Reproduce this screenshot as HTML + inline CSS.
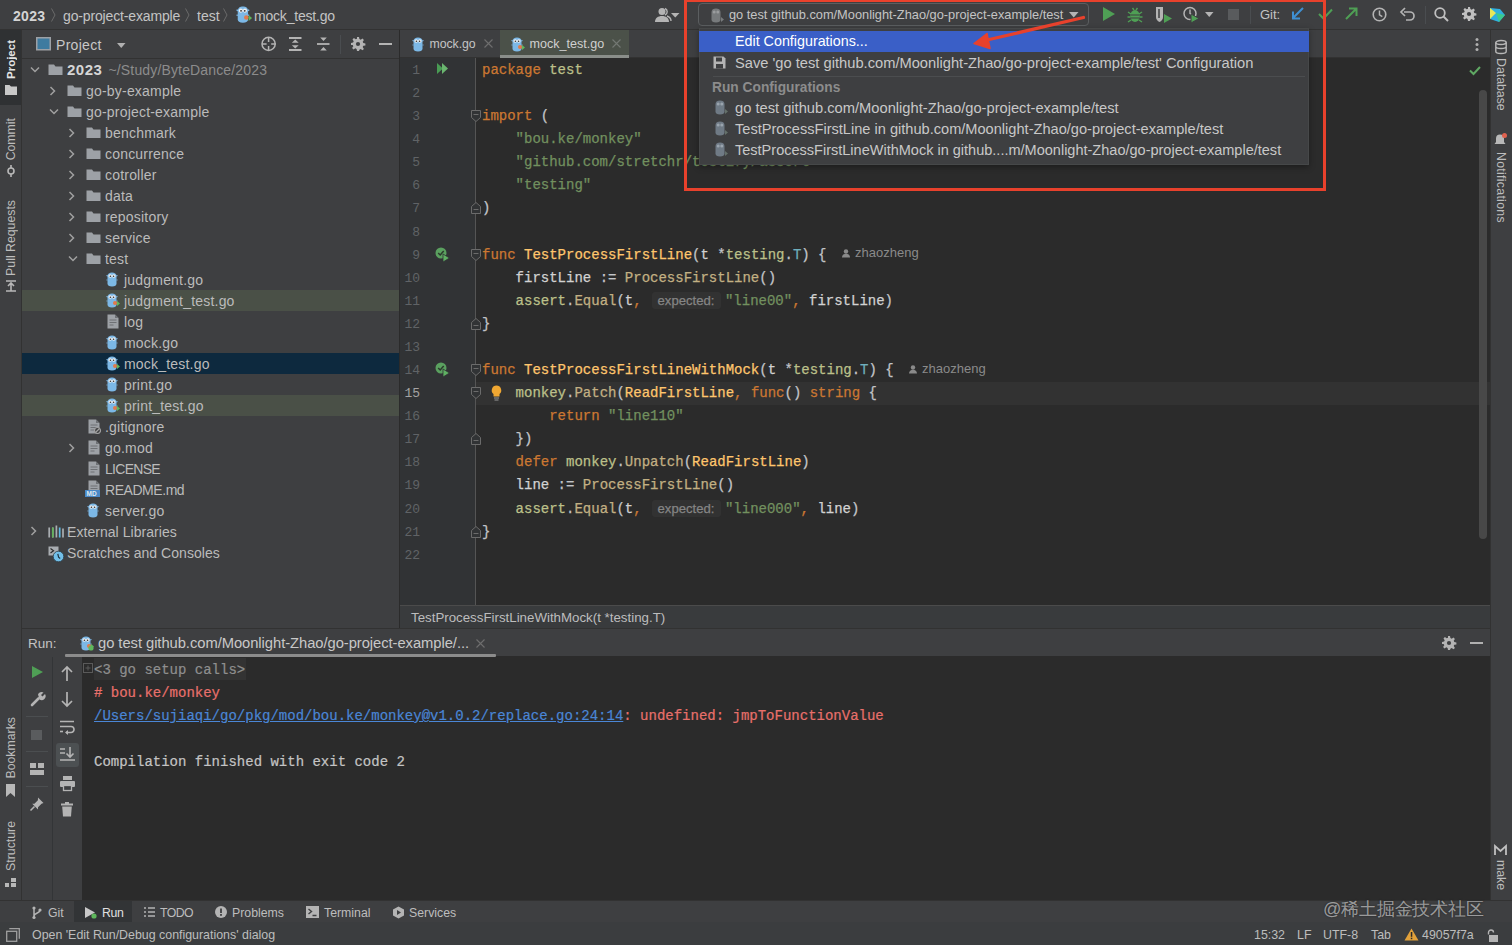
<!DOCTYPE html>
<html><head><meta charset="utf-8">
<style>
*{margin:0;padding:0;box-sizing:border-box}
html,body{width:1512px;height:945px;overflow:hidden;background:#3e3f41}
body{position:relative;font-family:"Liberation Sans",sans-serif;color:#bbbbbb;font-size:14px}
.a{position:absolute}
.t{position:absolute;white-space:pre}
.tr{position:absolute;white-space:pre;font-size:14px;line-height:21px;height:21px;color:#bbbbbb;letter-spacing:0.2px}
.cl{position:absolute;left:482px;white-space:pre;font-family:"Liberation Mono",monospace;font-size:14px;line-height:23px;height:23px;color:#c2c4c8;-webkit-text-stroke:0.25px currentColor}
.ln{position:absolute;width:22px;left:398px;text-align:right;font-family:"Liberation Mono",monospace;font-size:13px;line-height:23px;color:#6c6e71}
.k{color:#cc7832}.s{color:#72905f}.fd{color:#ffc66d}.pk{color:#bcc08a}.fc{color:#c2b083}.ty{color:#6fafbd}.v{color:#d2d2d2}
.hint{font-family:"Liberation Sans",sans-serif;font-size:13.1px;color:#858585;background:#323232;border-radius:3px;padding:0 0 0 5.5px;display:inline-block;width:69px;margin-left:10.4px;margin-right:3.9px;line-height:17px;height:17px;vertical-align:0px}
svg{position:absolute;overflow:visible}
</style></head><body>
<div class="a" style="left:0px;top:0px;width:1512px;height:29px;background:#3e3f41;"></div>
<div class="a" style="left:0px;top:29px;width:1512px;height:1px;background:#323232;"></div>
<div class="a" style="left:0px;top:30px;width:21px;height:870px;background:#3e3f41;"></div>
<div class="a" style="left:21px;top:30px;width:1px;height:870px;background:#323232;"></div>
<div class="a" style="left:0px;top:30px;width:21px;height:75px;background:#2f3133;"></div>
<div class="a" style="left:22px;top:30px;width:377px;height:28px;background:#3e3f41;"></div>
<div class="a" style="left:22px;top:58px;width:377px;height:1px;background:#323232;"></div>
<div class="a" style="left:22px;top:59px;width:377px;height:569px;background:#3e3f41;"></div>
<div class="a" style="left:399px;top:30px;width:1px;height:598px;background:#2b2b2b;"></div>
<div class="a" style="left:400px;top:30px;width:1090px;height:27px;background:#3e3f41;"></div>
<div class="a" style="left:400px;top:57px;width:1090px;height:1px;background:#323232;"></div>
<div class="a" style="left:400px;top:58px;width:76px;height:547px;background:#313335;"></div>
<div class="a" style="left:476px;top:58px;width:1014px;height:547px;background:#2b2b2b;"></div>
<div class="a" style="left:475px;top:58px;width:1px;height:547px;background:#555555;"></div>
<div class="a" style="left:400px;top:605px;width:1090px;height:1px;background:#4b4b4b;"></div>
<div class="a" style="left:400px;top:606px;width:1090px;height:22px;background:#393b3d;"></div>
<div class="a" style="left:22px;top:628px;width:1468px;height:1px;background:#323232;"></div>
<div class="a" style="left:22px;top:629px;width:1468px;height:27px;background:#3e3f41;"></div>
<div class="a" style="left:22px;top:656px;width:60px;height:244px;background:#3e3f41;"></div>
<div class="a" style="left:82px;top:656px;width:1408px;height:244px;background:#2b2b2b;"></div>
<div class="a" style="left:1490px;top:30px;width:1px;height:870px;background:#323232;"></div>
<div class="a" style="left:1491px;top:30px;width:21px;height:870px;background:#3e3f41;"></div>
<div class="a" style="left:0px;top:900px;width:1512px;height:1px;background:#323232;"></div>
<div class="a" style="left:0px;top:901px;width:1512px;height:21px;background:#3e3f41;"></div>
<div class="a" style="left:0px;top:922px;width:1512px;height:23px;background:#3b3d3f;"></div>
<div class="a" style="left:22px;top:290px;width:377px;height:21px;background:#4a5047;"></div>
<div class="a" style="left:22px;top:353px;width:377px;height:21px;background:#0d293e;"></div>
<div class="a" style="left:22px;top:395px;width:377px;height:21px;background:#4a5047;"></div>
<svg style="left:30px;top:66px;" width="10" height="7" viewBox="0 0 10 7"><path d="M1 1.5l4 4l4-4" fill="none" stroke="#a0a0a0" stroke-width="1.5"/></svg>
<svg style="left:48px;top:64px;" width="15" height="12" viewBox="0 0 15 12"><path d="M0.5 0.5h5.5l1.5 2h7v8.5h-14z" fill="#9da1a6"/></svg>
<div class="tr" style="left:67px;top:59.5px;font-weight:bold;color:#d6d6d6;font-size:15px;letter-spacing:0.5px;top:58.5px">2023</div>
<div class="tr" style="left:108.5px;top:59.5px;color:#8c8c8c;letter-spacing:0.15px">~/Study/ByteDance/2023</div>
<svg style="left:49px;top:86px;" width="7" height="10" viewBox="0 0 7 10"><path d="M1.5 1l4 4l-4 4" fill="none" stroke="#a0a0a0" stroke-width="1.5"/></svg>
<svg style="left:67px;top:85px;" width="15" height="12" viewBox="0 0 15 12"><path d="M0.5 0.5h5.5l1.5 2h7v8.5h-14z" fill="#9da1a6"/></svg>
<div class="tr" style="left:86px;top:80.5px;">go-by-example</div>
<svg style="left:49px;top:108px;" width="10" height="7" viewBox="0 0 10 7"><path d="M1 1.5l4 4l4-4" fill="none" stroke="#a0a0a0" stroke-width="1.5"/></svg>
<svg style="left:67px;top:106px;" width="15" height="12" viewBox="0 0 15 12"><path d="M0.5 0.5h5.5l1.5 2h7v8.5h-14z" fill="#9da1a6"/></svg>
<div class="tr" style="left:86px;top:101.5px;">go-project-example</div>
<svg style="left:68px;top:128px;" width="7" height="10" viewBox="0 0 7 10"><path d="M1.5 1l4 4l-4 4" fill="none" stroke="#a0a0a0" stroke-width="1.5"/></svg>
<svg style="left:86px;top:127px;" width="15" height="12" viewBox="0 0 15 12"><path d="M0.5 0.5h5.5l1.5 2h7v8.5h-14z" fill="#9da1a6"/></svg>
<div class="tr" style="left:105px;top:122.5px;">benchmark</div>
<svg style="left:68px;top:149px;" width="7" height="10" viewBox="0 0 7 10"><path d="M1.5 1l4 4l-4 4" fill="none" stroke="#a0a0a0" stroke-width="1.5"/></svg>
<svg style="left:86px;top:148px;" width="15" height="12" viewBox="0 0 15 12"><path d="M0.5 0.5h5.5l1.5 2h7v8.5h-14z" fill="#9da1a6"/></svg>
<div class="tr" style="left:105px;top:143.5px;">concurrence</div>
<svg style="left:68px;top:170px;" width="7" height="10" viewBox="0 0 7 10"><path d="M1.5 1l4 4l-4 4" fill="none" stroke="#a0a0a0" stroke-width="1.5"/></svg>
<svg style="left:86px;top:169px;" width="15" height="12" viewBox="0 0 15 12"><path d="M0.5 0.5h5.5l1.5 2h7v8.5h-14z" fill="#9da1a6"/></svg>
<div class="tr" style="left:105px;top:164.5px;">cotroller</div>
<svg style="left:68px;top:191px;" width="7" height="10" viewBox="0 0 7 10"><path d="M1.5 1l4 4l-4 4" fill="none" stroke="#a0a0a0" stroke-width="1.5"/></svg>
<svg style="left:86px;top:190px;" width="15" height="12" viewBox="0 0 15 12"><path d="M0.5 0.5h5.5l1.5 2h7v8.5h-14z" fill="#9da1a6"/></svg>
<div class="tr" style="left:105px;top:185.5px;">data</div>
<svg style="left:68px;top:212px;" width="7" height="10" viewBox="0 0 7 10"><path d="M1.5 1l4 4l-4 4" fill="none" stroke="#a0a0a0" stroke-width="1.5"/></svg>
<svg style="left:86px;top:211px;" width="15" height="12" viewBox="0 0 15 12"><path d="M0.5 0.5h5.5l1.5 2h7v8.5h-14z" fill="#9da1a6"/></svg>
<div class="tr" style="left:105px;top:206.5px;">repository</div>
<svg style="left:68px;top:233px;" width="7" height="10" viewBox="0 0 7 10"><path d="M1.5 1l4 4l-4 4" fill="none" stroke="#a0a0a0" stroke-width="1.5"/></svg>
<svg style="left:86px;top:232px;" width="15" height="12" viewBox="0 0 15 12"><path d="M0.5 0.5h5.5l1.5 2h7v8.5h-14z" fill="#9da1a6"/></svg>
<div class="tr" style="left:105px;top:227.5px;">service</div>
<svg style="left:68px;top:255px;" width="10" height="7" viewBox="0 0 10 7"><path d="M1 1.5l4 4l4-4" fill="none" stroke="#a0a0a0" stroke-width="1.5"/></svg>
<svg style="left:86px;top:253px;" width="15" height="12" viewBox="0 0 15 12"><path d="M0.5 0.5h5.5l1.5 2h7v8.5h-14z" fill="#9da1a6"/></svg>
<div class="tr" style="left:105px;top:248.5px;">test</div>
<svg style="left:106px;top:272px;" width="15" height="15" viewBox="0 0 15 15"><path d="M1.5 4.5C1.5 1.5 3.5 0.5 6 0.5S10.5 1.5 10.5 4.5V11.5C10.5 13.5 9 14.5 6 14.5S1.5 13.5 1.5 11.5Z" fill="#7cb8e6"/><path d="M0.5 3.5l1.5 0.5M11.5 3.5l-1.5 0.5M0.5 8l1 0M11.5 8l-1 0" stroke="#7cb8e6" stroke-width="1.2"/><circle cx="4.2" cy="4" r="1.8" fill="#f0f0f0"/><circle cx="7.8" cy="4" r="1.8" fill="#f0f0f0"/><circle cx="4.4" cy="4.2" r="0.8" fill="#333"/><circle cx="7.6" cy="4.2" r="0.8" fill="#333"/></svg>
<div class="tr" style="left:124px;top:269.5px;">judgment.go</div>
<svg style="left:106px;top:293px;" width="15" height="15" viewBox="0 0 15 15"><path d="M1.5 4.5C1.5 1.5 3.5 0.5 6 0.5S10.5 1.5 10.5 4.5V11.5C10.5 13.5 9 14.5 6 14.5S1.5 13.5 1.5 11.5Z" fill="#7cb8e6"/><path d="M0.5 3.5l1.5 0.5M11.5 3.5l-1.5 0.5M0.5 8l1 0M11.5 8l-1 0" stroke="#7cb8e6" stroke-width="1.2"/><circle cx="4.2" cy="4" r="1.8" fill="#f0f0f0"/><circle cx="7.8" cy="4" r="1.8" fill="#f0f0f0"/><circle cx="4.4" cy="4.2" r="0.8" fill="#333"/><circle cx="7.6" cy="4.2" r="0.8" fill="#333"/><circle cx="9" cy="10" r="2" fill="#e07a4a"/><path d="M11 8l3 2.5l-3 2.5z" fill="#5fb85c"/></svg>
<div class="tr" style="left:124px;top:290.5px;">judgment_test.go</div>
<svg style="left:107px;top:314px;" width="12" height="15" viewBox="0 0 12 15"><path d="M0.5 0.5h7.5l3.5 3.5v10.5h-11z" fill="#9da1a6"/><path d="M8 0.5v3.5h3.5" fill="#6e7175"/><path d="M2.5 6h7M2.5 8.5h7M2.5 11h4" stroke="#6e7175" stroke-width="1"/></svg>
<div class="tr" style="left:124px;top:311.5px;">log</div>
<svg style="left:106px;top:335px;" width="15" height="15" viewBox="0 0 15 15"><path d="M1.5 4.5C1.5 1.5 3.5 0.5 6 0.5S10.5 1.5 10.5 4.5V11.5C10.5 13.5 9 14.5 6 14.5S1.5 13.5 1.5 11.5Z" fill="#7cb8e6"/><path d="M0.5 3.5l1.5 0.5M11.5 3.5l-1.5 0.5M0.5 8l1 0M11.5 8l-1 0" stroke="#7cb8e6" stroke-width="1.2"/><circle cx="4.2" cy="4" r="1.8" fill="#f0f0f0"/><circle cx="7.8" cy="4" r="1.8" fill="#f0f0f0"/><circle cx="4.4" cy="4.2" r="0.8" fill="#333"/><circle cx="7.6" cy="4.2" r="0.8" fill="#333"/></svg>
<div class="tr" style="left:124px;top:332.5px;">mock.go</div>
<svg style="left:106px;top:356px;" width="15" height="15" viewBox="0 0 15 15"><path d="M1.5 4.5C1.5 1.5 3.5 0.5 6 0.5S10.5 1.5 10.5 4.5V11.5C10.5 13.5 9 14.5 6 14.5S1.5 13.5 1.5 11.5Z" fill="#7cb8e6"/><path d="M0.5 3.5l1.5 0.5M11.5 3.5l-1.5 0.5M0.5 8l1 0M11.5 8l-1 0" stroke="#7cb8e6" stroke-width="1.2"/><circle cx="4.2" cy="4" r="1.8" fill="#f0f0f0"/><circle cx="7.8" cy="4" r="1.8" fill="#f0f0f0"/><circle cx="4.4" cy="4.2" r="0.8" fill="#333"/><circle cx="7.6" cy="4.2" r="0.8" fill="#333"/><circle cx="9" cy="10" r="2" fill="#e07a4a"/><path d="M11 8l3 2.5l-3 2.5z" fill="#5fb85c"/></svg>
<div class="tr" style="left:124px;top:353.5px;">mock_test.go</div>
<svg style="left:106px;top:377px;" width="15" height="15" viewBox="0 0 15 15"><path d="M1.5 4.5C1.5 1.5 3.5 0.5 6 0.5S10.5 1.5 10.5 4.5V11.5C10.5 13.5 9 14.5 6 14.5S1.5 13.5 1.5 11.5Z" fill="#7cb8e6"/><path d="M0.5 3.5l1.5 0.5M11.5 3.5l-1.5 0.5M0.5 8l1 0M11.5 8l-1 0" stroke="#7cb8e6" stroke-width="1.2"/><circle cx="4.2" cy="4" r="1.8" fill="#f0f0f0"/><circle cx="7.8" cy="4" r="1.8" fill="#f0f0f0"/><circle cx="4.4" cy="4.2" r="0.8" fill="#333"/><circle cx="7.6" cy="4.2" r="0.8" fill="#333"/></svg>
<div class="tr" style="left:124px;top:374.5px;">print.go</div>
<svg style="left:106px;top:398px;" width="15" height="15" viewBox="0 0 15 15"><path d="M1.5 4.5C1.5 1.5 3.5 0.5 6 0.5S10.5 1.5 10.5 4.5V11.5C10.5 13.5 9 14.5 6 14.5S1.5 13.5 1.5 11.5Z" fill="#7cb8e6"/><path d="M0.5 3.5l1.5 0.5M11.5 3.5l-1.5 0.5M0.5 8l1 0M11.5 8l-1 0" stroke="#7cb8e6" stroke-width="1.2"/><circle cx="4.2" cy="4" r="1.8" fill="#f0f0f0"/><circle cx="7.8" cy="4" r="1.8" fill="#f0f0f0"/><circle cx="4.4" cy="4.2" r="0.8" fill="#333"/><circle cx="7.6" cy="4.2" r="0.8" fill="#333"/><circle cx="9" cy="10" r="2" fill="#e07a4a"/><path d="M11 8l3 2.5l-3 2.5z" fill="#5fb85c"/></svg>
<div class="tr" style="left:124px;top:395.5px;">print_test.go</div>
<svg style="left:88px;top:419px;" width="12" height="15" viewBox="0 0 12 15"><path d="M0.5 0.5h7.5l3.5 3.5v10.5h-11z" fill="#9da1a6"/><path d="M8 0.5v3.5h3.5" fill="#6e7175"/><path d="M2.5 6h7M2.5 8.5h7M2.5 11h4" stroke="#6e7175" stroke-width="1"/></svg>
<svg style="left:94px;top:427px;" width="8" height="8" viewBox="0 0 8 8"><circle cx="3.5" cy="3.5" r="3" fill="#3e3f41" stroke="#a0a0a0" stroke-width="1.2"/><path d="M1.5 5.5l4-4" stroke="#a0a0a0" stroke-width="1.2"/></svg>
<div class="tr" style="left:105px;top:416.5px;">.gitignore</div>
<svg style="left:68px;top:443px;" width="7" height="10" viewBox="0 0 7 10"><path d="M1.5 1l4 4l-4 4" fill="none" stroke="#a0a0a0" stroke-width="1.5"/></svg>
<svg style="left:88px;top:440px;" width="12" height="15" viewBox="0 0 12 15"><path d="M0.5 0.5h7.5l3.5 3.5v10.5h-11z" fill="#9da1a6"/><path d="M8 0.5v3.5h3.5" fill="#6e7175"/><path d="M2.5 6h7M2.5 8.5h7M2.5 11h4" stroke="#6e7175" stroke-width="1"/></svg>
<div class="tr" style="left:105px;top:437.5px;">go.mod</div>
<svg style="left:88px;top:461px;" width="12" height="15" viewBox="0 0 12 15"><path d="M0.5 0.5h7.5l3.5 3.5v10.5h-11z" fill="#9da1a6"/><path d="M8 0.5v3.5h3.5" fill="#6e7175"/><path d="M2.5 6h7M2.5 8.5h7M2.5 11h4" stroke="#6e7175" stroke-width="1"/></svg>
<div class="tr" style="left:105px;top:458.5px;letter-spacing:-0.7px">LICENSE</div>
<svg style="left:88px;top:480px;" width="12" height="15" viewBox="0 0 12 15"><path d="M0.5 0.5h7.5l3.5 3.5v10.5h-11z" fill="#9da1a6"/><path d="M8 0.5v3.5h3.5" fill="#6e7175"/><path d="M2.5 6h7M2.5 8.5h7M2.5 11h4" stroke="#6e7175" stroke-width="1"/></svg>
<svg style="left:85px;top:490px;" width="16" height="8" viewBox="0 0 16 8"><rect x="0" y="0" width="15" height="7" fill="#4a88c7"/><text x="1.5" y="6" font-size="6.5" font-family="Liberation Sans" font-weight="bold" fill="#dfe8f0">MD</text></svg>
<div class="tr" style="left:105px;top:479.5px;letter-spacing:-0.45px">README.md</div>
<svg style="left:87px;top:503px;" width="15" height="15" viewBox="0 0 15 15"><path d="M1.5 4.5C1.5 1.5 3.5 0.5 6 0.5S10.5 1.5 10.5 4.5V11.5C10.5 13.5 9 14.5 6 14.5S1.5 13.5 1.5 11.5Z" fill="#7cb8e6"/><path d="M0.5 3.5l1.5 0.5M11.5 3.5l-1.5 0.5M0.5 8l1 0M11.5 8l-1 0" stroke="#7cb8e6" stroke-width="1.2"/><circle cx="4.2" cy="4" r="1.8" fill="#f0f0f0"/><circle cx="7.8" cy="4" r="1.8" fill="#f0f0f0"/><circle cx="4.4" cy="4.2" r="0.8" fill="#333"/><circle cx="7.6" cy="4.2" r="0.8" fill="#333"/></svg>
<div class="tr" style="left:105px;top:500.5px;">server.go</div>
<svg style="left:30px;top:526px;" width="7" height="10" viewBox="0 0 7 10"><path d="M1.5 1l4 4l-4 4" fill="none" stroke="#a0a0a0" stroke-width="1.5"/></svg>
<svg style="left:48px;top:525px;" width="16" height="14" viewBox="0 0 16 14"><path d="M1.2 2.5v10M4.8 2.5v10M8.4 0.5v12M15 3.5v9" stroke="#a9adb1" stroke-width="1.7"/><path d="M4.8 2.5v10" stroke="#62b35a" stroke-width="1.7"/><path d="M11.7 2.5v10" stroke="#5cb8e0" stroke-width="1.7"/></svg>
<div class="tr" style="left:67px;top:521.5px;letter-spacing:0.05px">External Libraries</div>
<svg style="left:48px;top:546px;" width="18" height="16" viewBox="0 0 18 16"><path d="M0.5 0.5h10v9h-10z" fill="#a9adb1"/><path d="M2.5 2.5l3 2.2l-3 2.2" stroke="#2b2b2b" stroke-width="1.2" fill="none"/><circle cx="10.5" cy="10.5" r="5.3" fill="#72bfe8" stroke="#2a3a44" stroke-width="0.8"/><path d="M9.8 7.8l0.8 3.4l1.6 1.2" stroke="#1e3340" stroke-width="1.2" fill="none"/></svg>
<div class="tr" style="left:67px;top:542.5px;letter-spacing:0.05px">Scratches and Consoles</div>
<svg style="left:36px;top:37px;" width="15" height="14" viewBox="0 0 15 14"><rect x="0.75" y="0.75" width="13.5" height="12" fill="#3e7ba0" stroke="#9da1a6" stroke-width="1.5"/></svg>
<div class="t" style="left:56px;top:34.5px;font-size:14px;line-height:21px;color:#c8c8c8;letter-spacing:0.3px">Project</div>
<svg style="left:117px;top:43px;" width="9" height="6" viewBox="0 0 9 6"><path d="M0 0h8.5l-4.25 5z" fill="#b0b0b0"/></svg>
<svg style="left:261px;top:36px;" width="16" height="16" viewBox="0 0 16 16"><circle cx="7.6" cy="7.9" r="6.6" fill="none" stroke="#b4b4b4" stroke-width="1.5"/><path d="M7.6 1.3v4.6M7.6 9.9v4.6M1 7.9h4.6M10.2 7.9h4.6" stroke="#b4b4b4" stroke-width="1.5"/></svg>
<svg style="left:289px;top:36px;" width="14" height="16" viewBox="0 0 14 16"><path d="M0 2h12.5M0 14h12.5" stroke="#b4b4b4" stroke-width="1.8"/><path d="M2.8 6.8l3.45-3.2l3.45 3.2z M2.8 9.2l3.45 3.2l3.45-3.2z" fill="#b4b4b4"/></svg>
<svg style="left:317px;top:36px;" width="14" height="16" viewBox="0 0 14 16"><path d="M0 8h12.5" stroke="#b4b4b4" stroke-width="1.8"/><path d="M3.2 1.6h6.6l-3.3 3.4z M3.2 14.4h6.6l-3.3-3.4z" fill="#b4b4b4"/></svg>
<div class="a" style="left:340px;top:35px;width:1px;height:19px;background:#4a4d50;"></div>
<svg style="left:351px;top:37px;" width="14" height="14" viewBox="0 0 14 14"><path d="M6 0h2l.4 2.1 1.3.6 1.8-1.2 1.4 1.4-1.2 1.8.6 1.3 2.1.4v2l-2.1.4-.6 1.3 1.2 1.8-1.4 1.4-1.8-1.2-1.3.6L8 14H6l-.4-2.1-1.3-.6-1.8 1.2-1.4-1.4 1.2-1.8-.6-1.3L0 8V6l2.1-.4.6-1.3-1.2-1.8 1.4-1.4 1.8 1.2 1.3-.6z" fill="#b4b4b4"/><circle cx="7" cy="7" r="2.1" fill="#3e3f41"/></svg>
<svg style="left:379px;top:43px;" width="13" height="2" viewBox="0 0 13 2"><rect width="13" height="2" fill="#b4b4b4"/></svg>
<div class="t" style="left:4px;top:40px;writing-mode:vertical-rl;transform:rotate(180deg);font-size:12.3px;line-height:14px;color:#bdbdbd;font-weight:bold;color:#e4e4e4;font-size:11.5px">Project</div>
<svg style="left:5px;top:85px;" width="12" height="10" viewBox="0 0 12 10"><path d="M0 0h4.5l1.5 1.5h6v8.5h-12z" fill="#c8c8c8"/></svg>
<div class="t" style="left:4px;top:118px;writing-mode:vertical-rl;transform:rotate(180deg);font-size:12.3px;line-height:14px;color:#bdbdbd;">Commit</div>
<svg style="left:5px;top:165px;" width="12" height="12" viewBox="0 0 12 12"><circle cx="6" cy="6" r="3" fill="none" stroke="#b8b8b8" stroke-width="1.6"/><path d="M6 0v3M6 9v3" stroke="#b8b8b8" stroke-width="1.6"/></svg>
<div class="t" style="left:4px;top:200px;writing-mode:vertical-rl;transform:rotate(180deg);font-size:12.3px;line-height:14px;color:#bdbdbd;">Pull Requests</div>
<svg style="left:5px;top:280px;" width="12" height="12" viewBox="0 0 12 12"><path d="M1 1h10M1 11h10M6 3v8M3 6l3-3l3 3" fill="none" stroke="#b8b8b8" stroke-width="1.6"/></svg>
<div class="t" style="left:4px;top:717px;writing-mode:vertical-rl;transform:rotate(180deg);font-size:12.3px;line-height:14px;color:#bdbdbd;">Bookmarks</div>
<svg style="left:6px;top:784px;" width="9" height="13" viewBox="0 0 9 13"><path d="M0 0h9v13l-4.5-4l-4.5 4z" fill="#b8b8b8"/></svg>
<div class="t" style="left:4px;top:821px;writing-mode:vertical-rl;transform:rotate(180deg);font-size:12.3px;line-height:14px;color:#bdbdbd;">Structure</div>
<svg style="left:5px;top:878px;" width="12" height="10" viewBox="0 0 12 10"><rect x="0" y="5" width="4" height="4" fill="#b8b8b8"/><rect x="6" y="5" width="5" height="4" fill="#b8b8b8"/><rect x="6" y="0" width="5" height="4" fill="#b8b8b8"/></svg>
<div class="t" style="left:13px;top:5.5px;font-weight:bold;font-size:14px;line-height:21px;color:#d4d4d4;letter-spacing:0.3px">2023</div>
<svg style="left:51px;top:8px;" width="5" height="14" viewBox="0 0 5 14"><path d="M0.5 0.5l3.5 6.5l-3.5 6.5" fill="none" stroke="#6a6a6a" stroke-width="1"/></svg>
<div class="t" style="left:63px;top:5.5px;font-size:14px;line-height:21px;color:#c4c4c4;letter-spacing:-0.15px">go-project-example</div>
<svg style="left:185px;top:8px;" width="5" height="14" viewBox="0 0 5 14"><path d="M0.5 0.5l3.5 6.5l-3.5 6.5" fill="none" stroke="#6a6a6a" stroke-width="1"/></svg>
<div class="t" style="left:197px;top:5.5px;font-size:14px;line-height:21px;color:#c4c4c4">test</div>
<svg style="left:223px;top:8px;" width="5" height="14" viewBox="0 0 5 14"><path d="M0.5 0.5l3.5 6.5l-3.5 6.5" fill="none" stroke="#6a6a6a" stroke-width="1"/></svg>
<div class="a" style="left:236px;top:6px;transform:scale(1.15);transform-origin:0 0"><svg style="left:0px;top:0px;" width="15" height="15" viewBox="0 0 15 15"><path d="M1.5 4.5C1.5 1.5 3.5 0.5 6 0.5S10.5 1.5 10.5 4.5V11.5C10.5 13.5 9 14.5 6 14.5S1.5 13.5 1.5 11.5Z" fill="#7cb8e6"/><path d="M0.5 3.5l1.5 0.5M11.5 3.5l-1.5 0.5M0.5 8l1 0M11.5 8l-1 0" stroke="#7cb8e6" stroke-width="1.2"/><circle cx="4.2" cy="4" r="1.8" fill="#f0f0f0"/><circle cx="7.8" cy="4" r="1.8" fill="#f0f0f0"/><circle cx="4.4" cy="4.2" r="0.8" fill="#333"/><circle cx="7.6" cy="4.2" r="0.8" fill="#333"/><circle cx="9" cy="10" r="2" fill="#e07a4a"/><path d="M11 8l3 2.5l-3 2.5z" fill="#5fb85c"/></svg>
</div><div class="t" style="left:254px;top:5.5px;font-size:14px;line-height:21px;color:#c4c4c4;letter-spacing:-0.2px">mock_test.go</div>
<svg style="left:412px;top:37px;" width="15" height="15" viewBox="0 0 15 15"><path d="M1.5 4.5C1.5 1.5 3.5 0.5 6 0.5S10.5 1.5 10.5 4.5V11.5C10.5 13.5 9 14.5 6 14.5S1.5 13.5 1.5 11.5Z" fill="#7cb8e6"/><path d="M0.5 3.5l1.5 0.5M11.5 3.5l-1.5 0.5M0.5 8l1 0M11.5 8l-1 0" stroke="#7cb8e6" stroke-width="1.2"/><circle cx="4.2" cy="4" r="1.8" fill="#f0f0f0"/><circle cx="7.8" cy="4" r="1.8" fill="#f0f0f0"/><circle cx="4.4" cy="4.2" r="0.8" fill="#333"/><circle cx="7.6" cy="4.2" r="0.8" fill="#333"/></svg>
<div class="t" style="left:429.5px;top:34px;font-size:12.3px;line-height:21px;color:#c4c4c4;letter-spacing:-0.05px">mock.go</div>
<svg style="left:484px;top:39px;" width="9" height="9" viewBox="0 0 9 9"><path d="M0.5 0.5l8 8M8.5 0.5l-8 8" stroke="#6e6e6e" stroke-width="1.1"/></svg>
<div class="a" style="left:500px;top:30px;width:129px;height:25px;background:#4b5149;"></div>
<div class="a" style="left:500px;top:55px;width:129px;height:3px;background:#8a8e8a;"></div>
<svg style="left:511px;top:37px;" width="15" height="15" viewBox="0 0 15 15"><path d="M1.5 4.5C1.5 1.5 3.5 0.5 6 0.5S10.5 1.5 10.5 4.5V11.5C10.5 13.5 9 14.5 6 14.5S1.5 13.5 1.5 11.5Z" fill="#7cb8e6"/><path d="M0.5 3.5l1.5 0.5M11.5 3.5l-1.5 0.5M0.5 8l1 0M11.5 8l-1 0" stroke="#7cb8e6" stroke-width="1.2"/><circle cx="4.2" cy="4" r="1.8" fill="#f0f0f0"/><circle cx="7.8" cy="4" r="1.8" fill="#f0f0f0"/><circle cx="4.4" cy="4.2" r="0.8" fill="#333"/><circle cx="7.6" cy="4.2" r="0.8" fill="#333"/><circle cx="9" cy="10" r="2" fill="#e07a4a"/><path d="M11 8l3 2.5l-3 2.5z" fill="#5fb85c"/></svg>
<div class="t" style="left:529.5px;top:34px;font-size:12.55px;line-height:21px;color:#d0d0d0">mock_test.go</div>
<svg style="left:612px;top:39px;" width="9" height="9" viewBox="0 0 9 9"><path d="M0.5 0.5l8 8M8.5 0.5l-8 8" stroke="#737873" stroke-width="1.1"/></svg>
<svg style="left:1475px;top:38px;" width="4" height="13" viewBox="0 0 4 13"><circle cx="2" cy="1.5" r="1.5" fill="#b0b0b0"/><circle cx="2" cy="6.5" r="1.5" fill="#b0b0b0"/><circle cx="2" cy="11.5" r="1.5" fill="#b0b0b0"/></svg>
<div class="a" style="left:476px;top:382.12px;width:1014px;height:23px;background:#323232;"></div>
<div class="a" style="left:400px;top:382.12px;width:75px;height:23px;background:#313335;"></div>
<div class="cl" style="left:482px;top:59.0px;"><span class="k">package</span> <span class="pk">test</span></div>
<div class="cl" style="left:482px;top:105.16px;"><span class="k">import</span> (</div>
<div class="cl" style="left:482px;top:128.24px;">    <span class="s">&quot;bou.ke/monkey&quot;</span></div>
<div class="cl" style="left:482px;top:151.32px;">    <span class="s">&quot;github.com/stretchr/testify/assert&quot;</span></div>
<div class="cl" style="left:482px;top:174.4px;">    <span class="s">&quot;testing&quot;</span></div>
<div class="cl" style="left:482px;top:197.48px;">)</div>
<div class="cl" style="left:482px;top:243.64px;"><span class="k">func</span> <span class="fd">TestProcessFirstLine</span>(<span class="v">t</span> *<span class="pk">testing</span>.<span class="ty">T</span>) {</div>
<div class="cl" style="left:482px;top:266.72px;">    <span class="v">firstLine</span> := <span class="fc">ProcessFirstLine</span>()</div>
<div class="cl" style="left:482px;top:289.8px;">    <span class="pk">assert</span>.<span class="fc">Equal</span>(<span class="v">t</span><span class="k">,</span><span class="hint">expected:</span><span class="s">&quot;line00&quot;</span><span class="k">,</span> <span class="v">firstLine</span>)</div>
<div class="cl" style="left:482px;top:312.88px;">}</div>
<div class="cl" style="left:482px;top:359.04px;"><span class="k">func</span> <span class="fd">TestProcessFirstLineWithMock</span>(<span class="v">t</span> *<span class="pk">testing</span>.<span class="ty">T</span>) {</div>
<div class="cl" style="left:482px;top:382.12px;">    <span class="pk">monkey</span>.<span class="fc">Patch</span>(<span class="fd">ReadFirstLine</span><span class="k">,</span> <span class="k">func</span>() <span class="k">string</span> {</div>
<div class="cl" style="left:482px;top:405.2px;">        <span class="k">return</span> <span class="s">&quot;line110&quot;</span></div>
<div class="cl" style="left:482px;top:428.28px;">    })</div>
<div class="cl" style="left:482px;top:451.36px;">    <span class="k">defer</span> <span class="pk">monkey</span>.<span class="fc">Unpatch</span>(<span class="fd">ReadFirstLine</span>)</div>
<div class="cl" style="left:482px;top:474.44px;">    <span class="v">line</span> := <span class="fc">ProcessFirstLine</span>()</div>
<div class="cl" style="left:482px;top:497.52px;">    <span class="pk">assert</span>.<span class="fc">Equal</span>(<span class="v">t</span><span class="k">,</span><span class="hint">expected:</span><span class="s">&quot;line000&quot;</span><span class="k">,</span> <span class="v">line</span>)</div>
<div class="cl" style="left:482px;top:520.6px;">}</div>
<div class="ln" style="left:398px;top:59.0px;color:#606366">1</div>
<div class="ln" style="left:398px;top:82.08px;color:#606366">2</div>
<div class="ln" style="left:398px;top:105.16px;color:#606366">3</div>
<div class="ln" style="left:398px;top:128.24px;color:#606366">4</div>
<div class="ln" style="left:398px;top:151.32px;color:#606366">5</div>
<div class="ln" style="left:398px;top:174.4px;color:#606366">6</div>
<div class="ln" style="left:398px;top:197.48px;color:#606366">7</div>
<div class="ln" style="left:398px;top:220.56px;color:#606366">8</div>
<div class="ln" style="left:398px;top:243.64px;color:#606366">9</div>
<div class="ln" style="left:398px;top:266.72px;color:#606366">10</div>
<div class="ln" style="left:398px;top:289.8px;color:#606366">11</div>
<div class="ln" style="left:398px;top:312.88px;color:#606366">12</div>
<div class="ln" style="left:398px;top:335.96px;color:#606366">13</div>
<div class="ln" style="left:398px;top:359.04px;color:#606366">14</div>
<div class="ln" style="left:398px;top:382.12px;color:#a4a3a3">15</div>
<div class="ln" style="left:398px;top:405.2px;color:#606366">16</div>
<div class="ln" style="left:398px;top:428.28px;color:#606366">17</div>
<div class="ln" style="left:398px;top:451.36px;color:#606366">18</div>
<div class="ln" style="left:398px;top:474.44px;color:#606366">19</div>
<div class="ln" style="left:398px;top:497.52px;color:#606366">20</div>
<div class="ln" style="left:398px;top:520.6px;color:#606366">21</div>
<div class="ln" style="left:398px;top:543.68px;color:#606366">22</div>
<svg style="left:842px;top:249.14px;" width="8" height="9" viewBox="0 0 8 9"><circle cx="4" cy="2.5" r="2.2" fill="#8a8a8a"/><path d="M0 8.5c0-2.5 1.8-3.8 4-3.8s4 1.3 4 3.8z" fill="#8a8a8a"/></svg>
<div class="t" style="left:855px;top:242.14px;font-size:13px;line-height:21px;color:#8a8a8a">zhaozheng</div>
<svg style="left:909px;top:364.54px;" width="8" height="9" viewBox="0 0 8 9"><circle cx="4" cy="2.5" r="2.2" fill="#8a8a8a"/><path d="M0 8.5c0-2.5 1.8-3.8 4-3.8s4 1.3 4 3.8z" fill="#8a8a8a"/></svg>
<div class="t" style="left:922px;top:357.54px;font-size:13px;line-height:21px;color:#8a8a8a">zhaozheng</div>
<svg style="left:437px;top:63px;" width="12" height="11" viewBox="0 0 12 11"><path d="M0 0l6 5.5l-6 5.5z" fill="#499c54"/><path d="M5 0l6 5.5l-6 5.5z" fill="#6ab56f"/><path d="M5 0l6 5.5l-6 5.5" fill="none" stroke="#2f3133" stroke-width="0"/></svg>
<svg style="left:435px;top:246.64px;" width="15" height="15" viewBox="0 0 15 15"><circle cx="6" cy="6" r="5.5" fill="#5aa05f"/><path d="M3.2 6l2 2l3.5-4" fill="none" stroke="#2b3a2c" stroke-width="1.5"/><path d="M8 7l6.5 4l-6.5 4z" fill="#5fb063" stroke="#313335" stroke-width="0.8"/></svg>
<svg style="left:435px;top:362.04px;" width="15" height="15" viewBox="0 0 15 15"><circle cx="6" cy="6" r="5.5" fill="#5aa05f"/><path d="M3.2 6l2 2l3.5-4" fill="none" stroke="#2b3a2c" stroke-width="1.5"/><path d="M8 7l6.5 4l-6.5 4z" fill="#5fb063" stroke="#313335" stroke-width="0.8"/></svg>
<svg style="left:471px;top:110.16px;" width="10" height="12" viewBox="0 0 10 12"><path d="M0.5 0.5h9v7l-4.5 4l-4.5-4z" fill="#313335" stroke="#6b6b6b" stroke-width="1"/><path d="M2.5 4.5h5" stroke="#6b6b6b" stroke-width="1"/></svg>
<svg style="left:471px;top:248.64px;" width="10" height="12" viewBox="0 0 10 12"><path d="M0.5 0.5h9v7l-4.5 4l-4.5-4z" fill="#313335" stroke="#6b6b6b" stroke-width="1"/><path d="M2.5 4.5h5" stroke="#6b6b6b" stroke-width="1"/></svg>
<svg style="left:471px;top:364.04px;" width="10" height="12" viewBox="0 0 10 12"><path d="M0.5 0.5h9v7l-4.5 4l-4.5-4z" fill="#313335" stroke="#6b6b6b" stroke-width="1"/><path d="M2.5 4.5h5" stroke="#6b6b6b" stroke-width="1"/></svg>
<svg style="left:471px;top:387.12px;" width="10" height="12" viewBox="0 0 10 12"><path d="M0.5 0.5h9v7l-4.5 4l-4.5-4z" fill="#313335" stroke="#6b6b6b" stroke-width="1"/><path d="M2.5 4.5h5" stroke="#6b6b6b" stroke-width="1"/></svg>
<svg style="left:471px;top:202.48px;" width="10" height="12" viewBox="0 0 10 12"><path d="M0.5 11.5h9v-7l-4.5-4l-4.5 4z" fill="#313335" stroke="#6b6b6b" stroke-width="1"/><path d="M2.5 7.5h5" stroke="#6b6b6b" stroke-width="1"/></svg>
<svg style="left:471px;top:317.88px;" width="10" height="12" viewBox="0 0 10 12"><path d="M0.5 11.5h9v-7l-4.5-4l-4.5 4z" fill="#313335" stroke="#6b6b6b" stroke-width="1"/><path d="M2.5 7.5h5" stroke="#6b6b6b" stroke-width="1"/></svg>
<svg style="left:471px;top:433.28px;" width="10" height="12" viewBox="0 0 10 12"><path d="M0.5 11.5h9v-7l-4.5-4l-4.5 4z" fill="#313335" stroke="#6b6b6b" stroke-width="1"/><path d="M2.5 7.5h5" stroke="#6b6b6b" stroke-width="1"/></svg>
<svg style="left:471px;top:525.6px;" width="10" height="12" viewBox="0 0 10 12"><path d="M0.5 11.5h9v-7l-4.5-4l-4.5 4z" fill="#313335" stroke="#6b6b6b" stroke-width="1"/><path d="M2.5 7.5h5" stroke="#6b6b6b" stroke-width="1"/></svg>
<svg style="left:491px;top:385.12px;" width="11" height="16" viewBox="0 0 11 16"><path d="M5.5 0.5a4.8 4.8 0 0 1 3 8.5v2.5h-6v-2.5a4.8 4.8 0 0 1 3-8.5z" fill="#f0a732"/><path d="M3 13h5M3.5 15h4" stroke="#9a9a9a" stroke-width="1.2"/></svg>
<svg style="left:1469px;top:66px;" width="12" height="9" viewBox="0 0 12 9"><path d="M1 4.5l3.5 3.5l6.5-7" fill="none" stroke="#5fa863" stroke-width="2"/></svg>
<div class="a" style="left:1479px;top:90px;width:8px;height:449px;background:#484848;border-radius:4px"></div>
<div class="t" style="left:411px;top:607px;font-size:13.3px;line-height:21px;color:#bdbdbd">TestProcessFirstLineWithMock(t *testing.T)</div>
<div class="t" style="left:28px;top:633px;font-size:13.5px;line-height:21px;color:#c4c4c4">Run:</div>
<svg style="left:80px;top:636px;" width="15" height="15" viewBox="0 0 15 15"><path d="M1.5 4.5C1.5 1.5 3.5 0.5 6 0.5S10.5 1.5 10.5 4.5V11.5C10.5 13.5 9 14.5 6 14.5S1.5 13.5 1.5 11.5Z" fill="#7cb8e6"/><path d="M0.5 3.5l1.5 0.5M11.5 3.5l-1.5 0.5M0.5 8l1 0M11.5 8l-1 0" stroke="#7cb8e6" stroke-width="1.2"/><circle cx="4.2" cy="4" r="1.8" fill="#f0f0f0"/><circle cx="7.8" cy="4" r="1.8" fill="#f0f0f0"/><circle cx="4.4" cy="4.2" r="0.8" fill="#333"/><circle cx="7.6" cy="4.2" r="0.8" fill="#333"/><circle cx="9" cy="10" r="2" fill="#e07a4a"/><path d="M11 8l3 2.5l-3 2.5z" fill="#5fb85c"/></svg>
<svg style="left:88px;top:645px;" width="6" height="6" viewBox="0 0 6 6"><circle cx="3" cy="3" r="2.6" fill="#5fb85c"/></svg>
<div class="t" style="left:98px;top:633px;font-size:14.75px;line-height:21px;color:#c8c8c8;letter-spacing:-0.05px">go test github.com/Moonlight-Zhao/go-project-example/...</div>
<svg style="left:476px;top:639px;" width="9" height="9" viewBox="0 0 9 9"><path d="M0.5 0.5l8 8M8.5 0.5l-8 8" stroke="#6e6e6e" stroke-width="1.1"/></svg>
<div class="a" style="left:65px;top:654px;width:431px;height:3px;background:#8c8c8c;border-radius:1px"></div>
<svg style="left:1442px;top:636px;" width="14" height="14" viewBox="0 0 14 14"><path d="M6 0h2l.4 2.1 1.3.6 1.8-1.2 1.4 1.4-1.2 1.8.6 1.3 2.1.4v2l-2.1.4-.6 1.3 1.2 1.8-1.4 1.4-1.8-1.2-1.3.6L8 14H6l-.4-2.1-1.3-.6-1.8 1.2-1.4-1.4 1.2-1.8-.6-1.3L0 8V6l2.1-.4.6-1.3-1.2-1.8 1.4-1.4 1.8 1.2 1.3-.6z" fill="#b4b4b4"/><circle cx="7" cy="7" r="2.1" fill="#3e3f41"/></svg>
<svg style="left:1470px;top:642px;" width="13" height="2" viewBox="0 0 13 2"><rect width="13" height="2" fill="#b0b0b0"/></svg>
<div class="a" style="left:52px;top:657px;width:1px;height:243px;background:#333537;"></div>
<svg style="left:32px;top:666px;" width="11" height="12" viewBox="0 0 11 12"><path d="M0 0l11 6l-11 6z" fill="#4f9f55"/></svg>
<svg style="left:30px;top:691px;" width="15" height="16" viewBox="0 0 15 16"><path d="M2 14l6.5-6.5" stroke="#b4b4b4" stroke-width="2.6" stroke-linecap="round"/><path d="M8 3.5a4 4 0 0 1 5.5-2l-2.5 2.5l1.5 1.5l2.5-2.5a4 4 0 0 1-5.5 5.5z" fill="#b4b4b4"/></svg>
<div class="a" style="left:26px;top:716px;width:22px;height:1px;background:#4b4e50;"></div>
<div class="a" style="left:31px;top:730px;width:11px;height:10px;background:#5a5c5e;"></div>
<div class="a" style="left:26px;top:751px;width:22px;height:1px;background:#4b4e50;"></div>
<svg style="left:30px;top:763px;" width="14" height="12" viewBox="0 0 14 12"><rect x="0" y="0" width="6" height="5" fill="#b4b4b4"/><rect x="8" y="0" width="6" height="5" fill="#b4b4b4"/><rect x="0" y="7" width="14" height="5" fill="#b4b4b4"/></svg>
<div class="a" style="left:26px;top:786px;width:22px;height:1px;background:#4b4e50;"></div>
<svg style="left:30px;top:797px;" width="14" height="14" viewBox="0 0 14 14"><path d="M8 0.5l5.5 5.5l-2 0.8l-3.5 3.5l0 2.2l-5.8-5.8l2.2 0l3.5-3.5z" fill="#b4b4b4"/><path d="M4.5 9.5l-4 4" stroke="#b4b4b4" stroke-width="1.6"/></svg>
<svg style="left:61px;top:666px;" width="12" height="15" viewBox="0 0 12 15"><path d="M6 1v14M1 6l5-5l5 5" fill="none" stroke="#b4b4b4" stroke-width="1.7"/></svg>
<svg style="left:61px;top:692px;" width="12" height="15" viewBox="0 0 12 15"><path d="M6 0v14M1 9l5 5l5-5" fill="none" stroke="#b4b4b4" stroke-width="1.7"/></svg>
<svg style="left:60px;top:720px;" width="15" height="15" viewBox="0 0 15 15"><path d="M0 1.5h14M0 6.5h11a3 3 0 0 1 0 6h-5" fill="none" stroke="#b4b4b4" stroke-width="1.6"/><path d="M8 10l-3 2.5l3 2.5z" fill="#b4b4b4"/><path d="M0 11.5h3" stroke="#b4b4b4" stroke-width="1.6"/></svg>
<div class="a" style="left:56px;top:743px;width:23px;height:24px;background:#4c5052;border-radius:3px"></div>
<svg style="left:60px;top:747px;" width="15" height="15" viewBox="0 0 15 15"><path d="M0 2h5M0 6h5M0 13h15M10 0v10M6.5 6.5l3.5 3.5l3.5-3.5" fill="none" stroke="#b4b4b4" stroke-width="1.6"/></svg>
<svg style="left:60px;top:776px;" width="15" height="15" viewBox="0 0 15 15"><rect x="3" y="0" width="9" height="4" fill="#b4b4b4"/><rect x="0" y="5" width="15" height="6" rx="1" fill="#b4b4b4"/><rect x="3.5" y="9.5" width="8" height="5" fill="#3e3f41" stroke="#b4b4b4" stroke-width="1.3"/></svg>
<svg style="left:61px;top:802px;" width="12" height="15" viewBox="0 0 12 15"><rect x="0" y="1.5" width="12" height="2" fill="#b4b4b4"/><rect x="4" y="0" width="4" height="2" fill="#b4b4b4"/><path d="M1.2 4.5h9.6l-0.8 10h-8z" fill="#b4b4b4"/></svg>
<div class="a" style="left:94px;top:658px;width:152px;height:22px;background:#333333;"></div>
<svg style="left:83px;top:663px;" width="10" height="10" viewBox="0 0 10 10"><rect x="0.5" y="0.5" width="9" height="9" fill="none" stroke="#5a5a5a"/><path d="M2.5 5h5M5 2.5v5" stroke="#5a5a5a"/></svg>
<div class="t" style="left:94px;top:659px;font-family:Liberation Mono,monospace;font-size:14px;line-height:23px;-webkit-text-stroke:0.2px currentColor;color:#8f8f8f">&lt;3 go setup calls&gt;</div>
<div class="t" style="left:94px;top:682px;font-family:Liberation Mono,monospace;font-size:14px;line-height:23px;-webkit-text-stroke:0.2px currentColor;color:#e8706b"># bou.ke/monkey</div>
<div class="t" style="left:94px;top:705px;font-family:Liberation Mono,monospace;font-size:14px;line-height:23px;-webkit-text-stroke:0.2px currentColor;"><span style="color:#4a86d6;text-decoration:underline">/Users/sujiaqi/go/pkg/mod/bou.ke/monkey@v1.0.2/replace.go:24:14</span><span style="color:#e8706b">: undefined: jmpToFunctionValue</span></div>
<div class="t" style="left:94px;top:751px;font-family:Liberation Mono,monospace;font-size:14px;line-height:23px;-webkit-text-stroke:0.2px currentColor;color:#c4c4c4">Compilation finished with exit code 2</div>
<svg style="left:1495px;top:40px;" width="12" height="14" viewBox="0 0 12 14"><ellipse cx="6" cy="2.5" rx="5.2" ry="2" fill="none" stroke="#b8b8b8" stroke-width="1.4"/><path d="M0.8 2.5v9c0 1.1 2.3 2 5.2 2s5.2-.9 5.2-2v-9M0.8 6.5c0 1.1 2.3 2 5.2 2s5.2-.9 5.2-2" fill="none" stroke="#b8b8b8" stroke-width="1.4"/></svg>
<div class="t" style="left:1494px;top:58px;writing-mode:vertical-rl;font-size:12.3px;line-height:14px;color:#bdbdbd;">Database</div>
<svg style="left:1494px;top:133px;" width="13" height="13" viewBox="0 0 13 13"><path d="M6 1.5a4 4 0 0 1 4 4v3.5l1.5 2h-11l1.5-2v-3.5a4 4 0 0 1 4-4z" fill="#b8b8b8"/><circle cx="10.5" cy="2.5" r="2.5" fill="#e0624f"/></svg>
<div class="t" style="left:1494px;top:152px;writing-mode:vertical-rl;font-size:12.3px;line-height:14px;color:#bdbdbd;letter-spacing:0.3px">Notifications</div>
<svg style="left:1494px;top:845px;" width="13" height="11" viewBox="0 0 13 11"><path d="M1 10v-9l5.5 5l5.5-5v9" fill="none" stroke="#c0c0c0" stroke-width="1.8"/></svg>
<div class="t" style="left:1494px;top:860px;writing-mode:vertical-rl;font-size:12.3px;line-height:14px;color:#bdbdbd;">make</div>
<svg style="left:32px;top:906px;" width="10" height="13" viewBox="0 0 10 13"><circle cx="2" cy="2" r="1.6" fill="#b4b4b4"/><circle cx="8" cy="4" r="1.6" fill="#b4b4b4"/><circle cx="2" cy="11.5" r="1.6" fill="#b4b4b4"/><path d="M2 2v9.5M8 4c0 3.5-6 3-6 6" fill="none" stroke="#b4b4b4" stroke-width="1.5"/></svg>
<div class="t" style="left:48px;top:903px;font-size:12.3px;line-height:21px;color:#bdbdbd">Git</div>
<div class="a" style="left:74px;top:901px;width:58px;height:21px;background:#323436;"></div>
<svg style="left:85px;top:907px;" width="10" height="11" viewBox="0 0 10 11"><path d="M0 0l10 5.5l-10 5.5z" fill="#c8c8c8"/></svg>
<svg style="left:91px;top:913px;" width="6" height="6" viewBox="0 0 6 6"><circle cx="3" cy="3" r="2.6" fill="#5fb85c"/></svg>
<div class="t" style="left:102px;top:903px;font-size:12.3px;line-height:21px;color:#e0e0e0;letter-spacing:-0.4px">Run</div>
<svg style="left:144px;top:907px;" width="11" height="10" viewBox="0 0 11 10"><path d="M0 1h2M0 5h2M0 9h2M4 1h7M4 5h7M4 9h7" stroke="#b4b4b4" stroke-width="1.5"/></svg>
<div class="t" style="left:160px;top:903px;font-size:12.3px;line-height:21px;color:#bdbdbd;letter-spacing:-0.6px">TODO</div>
<svg style="left:215px;top:906px;" width="12" height="12" viewBox="0 0 12 12"><circle cx="6" cy="6" r="6" fill="#b4b4b4"/><rect x="5.1" y="2.5" width="1.8" height="4.5" fill="#3e3f41"/><rect x="5.1" y="8" width="1.8" height="1.8" fill="#3e3f41"/></svg>
<div class="t" style="left:232px;top:903px;font-size:12.3px;line-height:21px;color:#bdbdbd">Problems</div>
<svg style="left:306px;top:906px;" width="13" height="12" viewBox="0 0 13 12"><rect x="0" y="0" width="13" height="12" fill="#b4b4b4"/><path d="M2.5 3l3 2.5l-3 2.5M6.5 9.5h4" fill="none" stroke="#3e3f41" stroke-width="1.4"/></svg>
<div class="t" style="left:324px;top:903px;font-size:12.3px;line-height:21px;color:#bdbdbd">Terminal</div>
<svg style="left:392px;top:906px;" width="13" height="13" viewBox="0 0 13 13"><path d="M6.5 0.5l5.5 3v6l-5.5 3l-5.5-3v-6z" fill="#b4b4b4"/><path d="M5 4l4 2.5l-4 2.5z" fill="#3e3f41"/></svg>
<div class="t" style="left:409px;top:903px;font-size:12.3px;line-height:21px;color:#bdbdbd">Services</div>
<svg style="left:6px;top:928px;" width="14" height="14" viewBox="0 0 14 14"><rect x="0.7" y="3.3" width="10" height="10" fill="none" stroke="#a0a0a0" stroke-width="1.3"/><path d="M3.3 0.7h10v10" fill="none" stroke="#a0a0a0" stroke-width="1.3"/></svg>
<div class="t" style="left:32px;top:925px;font-size:12.4px;line-height:20px;color:#bdbdbd">Open 'Edit Run/Debug configurations' dialog</div>
<div class="t" style="left:1254px;top:925px;font-size:12.4px;line-height:20px;color:#bdbdbd">15:32</div>
<div class="t" style="left:1297px;top:925px;font-size:12.4px;line-height:20px;color:#bdbdbd">LF</div>
<div class="t" style="left:1323px;top:925px;font-size:12.4px;line-height:20px;color:#bdbdbd">UTF-8</div>
<div class="t" style="left:1371px;top:925px;font-size:12.4px;line-height:20px;color:#bdbdbd">Tab</div>
<svg style="left:1404px;top:928px;" width="15" height="13" viewBox="0 0 15 13"><path d="M7.5 0.5l7 12h-14z" fill="#e2a13a"/><rect x="6.8" y="4" width="1.5" height="4.8" fill="#2b2b2b"/><rect x="6.8" y="9.7" width="1.5" height="1.5" fill="#2b2b2b"/></svg>
<div class="t" style="left:1422px;top:925px;font-size:12.4px;line-height:20px;color:#bdbdbd">49057f7a</div>
<svg style="left:1486px;top:929px;" width="12" height="13" viewBox="0 0 12 13"><path d="M2.5 5.5v-2a2.5 2.5 0 0 1 5 0" fill="none" stroke="#b4b4b4" stroke-width="1.4"/><rect x="3" y="6" width="9" height="7" fill="#b4b4b4"/></svg>
<div class="t" style="left:1323px;top:896.5px;font-size:18.2px;line-height:24px;color:rgba(230,230,230,0.6);letter-spacing:-0.2px;text-shadow:0 0 2px rgba(0,0,0,0.5)">@稀土掘金技术社区</div>
<svg style="left:653px;top:7px;" width="20" height="16" viewBox="0 0 20 16"><circle cx="9" cy="4.5" r="3.5" fill="#b4b4b4"/><path d="M2 15c0-4 3-6 7-6s7 2 7 6z" fill="#b4b4b4"/><path d="M12 1.5a3.5 3.5 0 0 1 0 6.5M14 9c2.5.8 4 2.5 4 5" fill="none" stroke="#b4b4b4" stroke-width="1.4"/></svg>
<svg style="left:671px;top:13px;" width="9" height="5" viewBox="0 0 9 5"><path d="M0 0h8.5l-4.25 4.5z" fill="#b4b4b4"/></svg>
<div class="a" style="left:698px;top:3px;width:391px;height:23px;background:#3e3f41;border:1px solid #5b5e60;border-radius:4px"></div>
<svg style="left:710px;top:8px;" width="14" height="15" viewBox="0 0 14 15"><path d="M1.5 4C1.5 1.5 3.5 0.5 6 0.5S10.5 1.5 10.5 4V11.5C10.5 13.5 9 14.5 6 14.5S1.5 13.5 1.5 11.5Z" fill="#777a7c"/><circle cx="4.2" cy="4" r="1.5" fill="#9a9c9e"/><circle cx="7.8" cy="4" r="1.5" fill="#9a9c9e"/><path d="M11 9l3 2.5l-3 2.5z" fill="#777a7c"/></svg>
<div class="t" style="left:729px;top:5px;font-size:12.8px;line-height:20px;color:#c4c4c4">go test github.com/Moonlight-Zhao/go-project-example/test</div>
<svg style="left:1069px;top:12px;" width="10" height="6" viewBox="0 0 10 6"><path d="M0 0h9.5l-4.75 5.5z" fill="#b4b4b4"/></svg>
<svg style="left:1103px;top:7px;" width="12" height="14" viewBox="0 0 12 14"><path d="M0 0l12 7l-12 7z" fill="#4f9f55"/></svg>
<svg style="left:1127px;top:6px;" width="16" height="17" viewBox="0 0 16 17"><ellipse cx="8" cy="10" rx="4.8" ry="6" fill="#4f9f55"/><path d="M1 6l3 2M15 6l-3 2M0.5 11h3M15.5 11h-3M1 16l3-2M15 16l-3-2M5.5 2l1.5 2M10.5 2l-1.5 2" stroke="#4f9f55" stroke-width="1.4"/><path d="M3.5 9h9M3.5 12h9" stroke="#3e3f41" stroke-width="1.1"/></svg>
<svg style="left:1155px;top:6px;" width="17" height="17" viewBox="0 0 17 17"><path d="M1 1h7v10c0 2.5-1.5 4-3.5 5c-2-1-3.5-2.5-3.5-5z" fill="#b4b4b4"/><path d="M4 3v9" stroke="#3e3f41" stroke-width="1.5"/><path d="M9 8l8 4.5l-8 4.5z" fill="#4f9f55"/></svg>
<svg style="left:1183px;top:6px;" width="16" height="17" viewBox="0 0 16 17"><circle cx="7" cy="7.5" r="6" fill="none" stroke="#b4b4b4" stroke-width="1.5"/><path d="M7 3.5v4l2 1.5" fill="none" stroke="#b4b4b4" stroke-width="1.4"/><path d="M8 8l8 4.5l-8 4.5z" fill="#4f9f55" stroke="#3e3f41" stroke-width="1"/></svg>
<svg style="left:1205px;top:12px;" width="9" height="6" viewBox="0 0 9 6"><path d="M0 0h8.5l-4.25 5z" fill="#b4b4b4"/></svg>
<div class="a" style="left:1228px;top:9px;width:11px;height:11px;background:#595b5d;"></div>
<div class="a" style="left:1250px;top:6px;width:1px;height:18px;background:#4a4d50;"></div>
<div class="t" style="left:1260px;top:5px;font-size:13px;line-height:20px;color:#c4c4c4">Git:</div>
<svg style="left:1291px;top:7px;" width="13" height="13" viewBox="0 0 13 13"><path d="M12 1l-10 10M2 4.5v7h7" fill="none" stroke="#3f8fd2" stroke-width="2"/></svg>
<svg style="left:1318px;top:8px;" width="15" height="12" viewBox="0 0 15 12"><path d="M1 6l4.5 4.5l8.5-9" fill="none" stroke="#4f9f55" stroke-width="2"/></svg>
<svg style="left:1345px;top:7px;" width="13" height="13" viewBox="0 0 13 13"><path d="M1 12l10-10M4 1.5h7.5v7.5" fill="none" stroke="#4f9f55" stroke-width="2"/></svg>
<svg style="left:1372px;top:7px;" width="15" height="15" viewBox="0 0 15 15"><circle cx="7.5" cy="7.5" r="6.3" fill="none" stroke="#b4b4b4" stroke-width="1.6"/><path d="M7.5 3.5v4.3l2.8 1.8" fill="none" stroke="#b4b4b4" stroke-width="1.5"/></svg>
<svg style="left:1400px;top:7px;" width="15" height="14" viewBox="0 0 15 14"><path d="M4 5h6a4 4 0 0 1 0 8h-4" fill="none" stroke="#b4b4b4" stroke-width="1.7"/><path d="M5 1l-4 4l4 4" fill="none" stroke="#b4b4b4" stroke-width="1.7"/></svg>
<div class="a" style="left:1425px;top:6px;width:1px;height:18px;background:#4a4d50;"></div>
<svg style="left:1434px;top:7px;" width="15" height="15" viewBox="0 0 15 15"><circle cx="6" cy="6" r="4.8" fill="none" stroke="#c0c0c0" stroke-width="1.8"/><path d="M9.5 9.5l4.5 4.5" stroke="#c0c0c0" stroke-width="2"/></svg>
<svg style="left:1462px;top:7px;" width="14" height="14" viewBox="0 0 14 14"><path d="M6 0h2l.4 2.1 1.3.6 1.8-1.2 1.4 1.4-1.2 1.8.6 1.3 2.1.4v2l-2.1.4-.6 1.3 1.2 1.8-1.4 1.4-1.8-1.2-1.3.6L8 14H6l-.4-2.1-1.3-.6-1.8 1.2-1.4-1.4 1.2-1.8-.6-1.3L0 8V6l2.1-.4.6-1.3-1.2-1.8 1.4-1.4 1.8 1.2 1.3-.6z" fill="#c0c0c0"/><circle cx="7" cy="7" r="2.1" fill="#3e3f41"/></svg>
<svg style="left:1489px;top:6px;" width="17" height="17" viewBox="0 0 17 17"><path d="M1 2l10 1l5 6l-6 7l-9-3z" fill="#2fb0e0"/><path d="M1 2l6 5l-6 6z" fill="#e8e85a"/><path d="M7 7l9 2l-6 7z" fill="#3bc98f"/></svg>
<div class="a" style="left:699px;top:28px;width:610px;height:137px;background:#3e3f41;box-shadow:0 2px 6px rgba(0,0,0,0.35);border:1px solid #464849"></div>
<div class="a" style="left:699px;top:31px;width:610px;height:21px;background:#3a5fc7;"></div>
<div class="t" style="left:735px;top:31px;font-size:14.3px;line-height:21px;color:#ffffff">Edit Configurations...</div>
<svg style="left:713px;top:56px;" width="13" height="13" viewBox="0 0 13 13"><path d="M0.5 0.5h10l2 2v10h-12z" fill="#b4b4b4"/><rect x="3" y="1.5" width="6" height="4" fill="#3e3f41"/><rect x="3" y="8" width="7" height="4.5" fill="#3e3f41"/></svg>
<div class="t" style="left:735px;top:53px;font-size:14.7px;line-height:21px;color:#c8c8c8">Save 'go test github.com/Moonlight-Zhao/go-project-example/test' Configuration</div>
<div class="a" style="left:713px;top:76px;width:592px;height:1px;background:#4b4d4f;"></div>
<div class="t" style="left:712px;top:77px;font-weight:bold;font-size:13.75px;line-height:21px;color:#8c8c8c">Run Configurations</div>
<svg style="left:714px;top:100px;" width="14" height="15" viewBox="0 0 14 15"><path d="M1.5 4C1.5 1.5 3.5 0.5 6 0.5S10.5 1.5 10.5 4V11.5C10.5 13.5 9 14.5 6 14.5S1.5 13.5 1.5 11.5Z" fill="#6f7a85"/><circle cx="4.2" cy="4" r="1.5" fill="#9aa4ae"/><circle cx="7.8" cy="4" r="1.5" fill="#9aa4ae"/><path d="M11 9l3 2.5l-3 2.5z" fill="#64706a"/></svg>
<div class="t" style="left:735px;top:98px;font-size:14.7px;line-height:21px;color:#c8c8c8">go test github.com/Moonlight-Zhao/go-project-example/test</div>
<svg style="left:714px;top:121px;" width="14" height="15" viewBox="0 0 14 15"><path d="M1.5 4C1.5 1.5 3.5 0.5 6 0.5S10.5 1.5 10.5 4V11.5C10.5 13.5 9 14.5 6 14.5S1.5 13.5 1.5 11.5Z" fill="#6f7a85"/><circle cx="4.2" cy="4" r="1.5" fill="#9aa4ae"/><circle cx="7.8" cy="4" r="1.5" fill="#9aa4ae"/><path d="M11 9l3 2.5l-3 2.5z" fill="#64706a"/></svg>
<div class="t" style="left:735px;top:119px;font-size:14.6px;line-height:21px;color:#c8c8c8">TestProcessFirstLine in github.com/Moonlight-Zhao/go-project-example/test</div>
<svg style="left:714px;top:142px;" width="14" height="15" viewBox="0 0 14 15"><path d="M1.5 4C1.5 1.5 3.5 0.5 6 0.5S10.5 1.5 10.5 4V11.5C10.5 13.5 9 14.5 6 14.5S1.5 13.5 1.5 11.5Z" fill="#6f7a85"/><circle cx="4.2" cy="4" r="1.5" fill="#9aa4ae"/><circle cx="7.8" cy="4" r="1.5" fill="#9aa4ae"/><path d="M11 9l3 2.5l-3 2.5z" fill="#64706a"/></svg>
<div class="t" style="left:735px;top:140px;font-size:14.53px;line-height:21px;color:#c8c8c8">TestProcessFirstLineWithMock in github....m/Moonlight-Zhao/go-project-example/test</div>
<div class="a" style="left:684px;top:0px;width:642px;height:191px;background:transparent;border:3px solid #e8412c;border-top-width:2.5px"></div>
<svg style="left:960px;top:0px;" width="140" height="60" viewBox="0 0 140 60"><path d="M123.5 17.5L27 40" stroke="#e8412c" stroke-width="3.2" stroke-linecap="round"/><path d="M14 43.5L27 33.5L30 48.5z" fill="#e8412c" stroke="#e8412c" stroke-width="1.5" stroke-linejoin="round"/></svg>
</body></html>
